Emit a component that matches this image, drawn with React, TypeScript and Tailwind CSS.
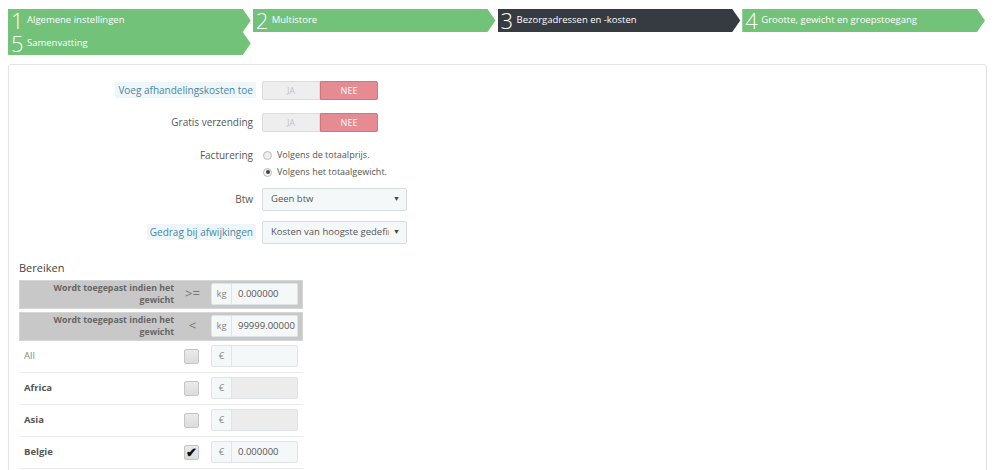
import React from 'react';

const steps = [
  { n: '1', label: 'Algemene instellingen', active: false },
  { n: '2', label: 'Multistore', active: false },
  { n: '3', label: 'Bezorgadressen en -kosten', active: true },
  { n: '4', label: 'Grootte, gewicht en groepstoegang', active: false },
  { n: '5', label: 'Samenvatting', active: false },
];

const zones = [
  { name: 'All', bold: false, checked: false, value: '', disabled: false },
  { name: 'Africa', bold: true, checked: false, value: '', disabled: true },
  { name: 'Asia', bold: true, checked: false, value: '', disabled: true },
  { name: 'Belgie', bold: true, checked: true, value: '0.000000', disabled: false },
];

const Toggle = () => (
  <div className="flex h-[19px] w-[116px] text-[9px] leading-none">
    <div className="flex flex-1 items-center justify-center rounded-l-[2px] border border-[#dcdcdc] bg-[#eeeeee] text-[#c4c4c4]">JA</div>
    <div className="flex flex-1 items-center justify-center rounded-r-[2px] border border-[#d2747c] bg-[#e58b92] text-white">NEE</div>
  </div>
);

const Select = ({ text }: { text: string }) => (
  <div className="flex h-[23px] w-[145px] items-center rounded-[2px] border border-[#d8dde0] bg-[#f5f8f9] pl-2 pr-[6px] text-[9.5px] text-[#555]">
    <span className="min-w-0 flex-1 overflow-hidden whitespace-nowrap">{text}</span>
    <span className="ml-[4px] shrink-0 text-[7px] text-[#444]">▼</span>
  </div>
);

const HelpLabel = ({ text }: { text: string }) => (
  <span className="rounded-[2px] bg-[#eef6f9] px-[3px] py-[1px] text-[#4a87a3]">{text}</span>
);

const InputGroup = ({ unit, value, disabled }: { unit: string; value: string; disabled?: boolean }) => (
  <div className="flex h-[22px] w-[87px] text-[9.5px]">
    <div className="flex w-[21px] items-center justify-center rounded-l-[2px] border border-[#dfe4e6] bg-[#f5f8f9] text-[#888]">{unit}</div>
    <div className={`flex flex-1 items-center rounded-r-[2px] border border-l-0 border-[#dfe4e6] pl-[6px] text-[#555] ${disabled ? 'bg-[#ececec]' : 'bg-[#f5f8f9]'}`}>{value}</div>
  </div>
);

export default function App() {
  return (
    <div className="min-h-[470px] bg-white pl-2 pr-[13px] pt-[9px] text-[#555]" style={{ fontFamily: '"Open Sans", "Liberation Sans", sans-serif' }}>
      {/* Wizard */}
      <div className="grid grid-cols-4">
        {steps.map((s) => (
          <div
            key={s.n}
            className={`flex h-[23px] items-center overflow-hidden pl-[3px] text-white ${s.active ? 'bg-[#363a41]' : 'bg-[#72c279]'} [clip-path:polygon(0_0,calc(100%-10px)_0,calc(100%-2px)_50%,calc(100%-10px)_100%,0_100%)]`}
          >
            <span className="w-[15px] text-[22px] font-light leading-[23px]">{s.n}</span>
            <span className="ml-[1px] text-[9.5px]">{s.label}</span>
          </div>
        ))}
      </div>

      {/* Panel */}
      <div className="mt-[9px] rounded-[3px] border border-[#e3e3e3] bg-white pb-4 shadow-[0_1px_2px_rgba(0,0,0,0.04)]">
        <div className="flex flex-col pt-[16px] text-[10px]">
          <div className="flex h-[19px] items-center">
            <div className="w-[247px] text-right"><HelpLabel text="Voeg afhandelingskosten toe" /></div>
            <div className="ml-[6px]"><Toggle /></div>
          </div>
          <div className="mt-[13px] flex h-[19px] items-center">
            <div className="w-[247px] pr-[3px] text-right">Gratis verzending</div>
            <div className="ml-[6px]"><Toggle /></div>
          </div>
          <div className="mt-[16px] flex">
            <div className="w-[247px] pr-[3px] text-right leading-[14px]">Facturering</div>
            <div className="ml-[6px] flex flex-col gap-[3px] text-[9px]">
              <label className="flex h-[14px] items-center gap-[5px]">
                <span className="ml-[1px] h-[9px] w-[9px] rounded-full border border-[#bbb] bg-[#eee]" />
                <span>Volgens de totaalprijs.</span>
              </label>
              <label className="flex h-[14px] items-center gap-[5px]">
                <span className="ml-[1px] flex h-[9px] w-[9px] items-center justify-center rounded-full border border-[#bbb] bg-[#f3f3f3]">
                  <span className="h-[4px] w-[4px] rounded-full bg-[#444]" />
                </span>
                <span>Volgens het totaalgewicht.</span>
              </label>
            </div>
          </div>
          <div className="mt-[9px] flex items-center">
            <div className="w-[247px] pr-[3px] text-right">Btw</div>
            <div className="ml-[6px]"><Select text="Geen btw" /></div>
          </div>
          <div className="mt-[10px] flex items-center">
            <div className="w-[247px] text-right"><HelpLabel text="Gedrag bij afwijkingen" /></div>
            <div className="ml-[6px]"><Select text="Kosten van hoogste gedefinieerde" /></div>
          </div>
        </div>

        {/* Bereiken */}
        <div className="ml-[10px] mt-[16px] w-[284px]">
          <div className="text-[11px] text-[#444]">Bereiken</div>
          <div className="mt-[3px] flex flex-col gap-[3px]">
            {[
              { op: '>=', val: '0.000000' },
              { op: '<', val: '99999.00000' },
            ].map((h) => (
              <div key={h.op} className="flex h-[29px] items-center border border-[#d6d6d6] bg-[#c8c8c8]">
                <div className="w-[154px] text-right text-[8.8px] font-bold leading-[12px] text-[#666]">Wordt toegepast indien het gewicht</div>
                <div className="w-[37px] text-center text-[13px] text-[#777]">{h.op}</div>
                <InputGroup unit="kg" value={h.val} />
              </div>
            ))}
          </div>
          <div className="flex flex-col">
            {zones.map((z) => (
              <div key={z.name} className="flex h-[32px] items-center border-b border-[#ececec]">
                <div className={`w-[165px] pl-[5px] text-[9.5px] ${z.bold ? 'font-bold text-[#555]' : 'text-[#888]'}`}>{z.name}</div>
                <div className="flex w-[27px] justify-start">
                  <span className="flex h-[15px] w-[15px] items-center justify-center rounded-[2px] border border-[#c4c4c4] bg-gradient-to-b from-[#eaeaea] to-[#dcdcdc] text-[13px] font-bold leading-none text-[#111]">
                    {z.checked ? '✔' : ''}
                  </span>
                </div>
                <InputGroup unit="€" value={z.value} disabled={z.disabled} />
              </div>
            ))}
          </div>
        </div>
      </div>
    </div>
  );
}
